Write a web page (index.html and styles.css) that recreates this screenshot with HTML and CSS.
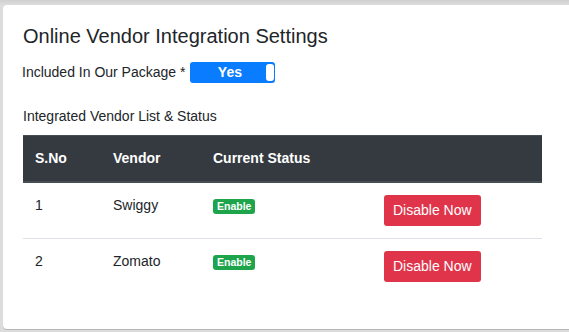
FILE: index.html
```html
<!DOCTYPE html>
<html>
<head>
<meta charset="utf-8">
<link rel="stylesheet" href="styles.css">
</head>
<body>
<div class="card">
  <h1 class="title">Online Vendor Integration Settings</h1>
  <div class="pkg-row">
    <span class="pkg-label">Included In Our Package *</span>
    <span class="toggle"><span class="toggle-text">Yes</span><span class="knob"></span></span>
  </div>
  <div class="list-label">Integrated Vendor List &amp; Status</div>
  <table class="vtable">
    <thead>
      <tr>
        <th class="c1">S.No</th>
        <th class="c2">Vendor</th>
        <th class="c3">Current Status</th>
        <th class="c4"></th>
      </tr>
    </thead>
    <tbody>
      <tr>
        <td>1</td>
        <td>Swiggy</td>
        <td><span class="badge">Enable</span></td>
        <td><button class="btn">Disable Now</button></td>
      </tr>
      <tr>
        <td>2</td>
        <td>Zomato</td>
        <td><span class="badge">Enable</span></td>
        <td><button class="btn">Disable Now</button></td>
      </tr>
    </tbody>
  </table>
</div>
</body>
</html>
```

FILE: styles.css
```css
html, body {
  margin: 0;
  padding: 0;
}
body {
  background: linear-gradient(#d0d0d0, #dcdcdc 5px, #dcdcdc);
  padding: 5px 0 0 3px;
  height: 332px;
  box-sizing: border-box;
  overflow: hidden;
  font-family: "Liberation Sans", Arial, sans-serif;
  color: #212529;
}
.card {
  background: #fff;
  border-radius: 4px 0 0 4px;
  height: 324px;
  width: 100%;
  box-sizing: border-box;
  padding: 19px 0 0 20px;
  box-shadow: 0 1px 0 #b5b5b5;
}
.title {
  margin: 0;
  font-size: 20px;
  font-weight: normal;
  line-height: 24px;
}
.pkg-row {
  display: flex;
  align-items: center;
  margin-top: 14px;
  font-size: 14px;
  line-height: 21px;
}
.pkg-label {
  margin-left: -1px;
}
.toggle {
  display: inline-flex;
  align-items: center;
  width: 85px;
  height: 21px;
  box-sizing: border-box;
  margin-left: 5px;
  background: #0a7cff;
  border-radius: 3px;
  padding: 2px 1px 2px 0;
}
.toggle-text {
  flex: 1;
  text-align: center;
  color: #fff;
  font-weight: bold;
  font-size: 14px;
  padding-left: 3px;
}
.knob {
  width: 8px;
  height: 17px;
  background: #fff;
  border-radius: 3px;
}
.list-label {
  margin-top: 23px;
  font-size: 14px;
  line-height: 21px;
}
.vtable {
  margin-top: 8px;
  width: 519px;
  border-collapse: collapse;
  font-size: 14px;
  line-height: 21px;
}
.vtable th, .vtable td {
  padding: 12px;
  text-align: left;
  vertical-align: top;
}
.vtable th {
  background: #343a40;
  color: #fff;
  font-weight: bold;
  border-top: 1px solid #454d55;
  border-bottom: 2px solid #454d55;
}
.vtable tbody tr + tr td {
  border-top: 1px solid #dee2e6;
}
.c1 { width: 54px; }
.c2 { width: 76px; }
.c3 { width: 147px; }
.badge {
  display: inline-block;
  background: #1ea54c;
  color: #fff;
  font-size: 10.5px;
  font-weight: bold;
  line-height: 11px;
  padding: 2px 4px;
  border-radius: 3px;
  vertical-align: top;
  margin-top: 4px;
}
.btn {
  font-family: "Liberation Sans", Arial, sans-serif;
  font-size: 14px;
  line-height: 21px;
  color: #fff;
  background: #e0344a;
  border: none;
  border-radius: 3px;
  padding: 5px 9px;
  margin: 0;
}
```
